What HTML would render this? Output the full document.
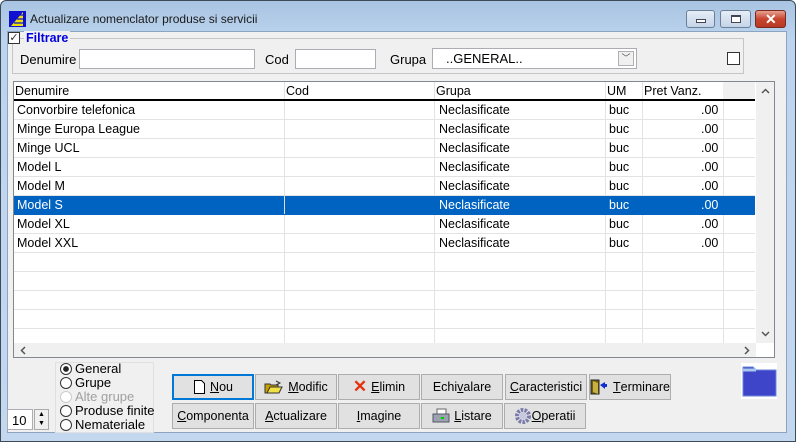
<!DOCTYPE html>
<html><head><meta charset="utf-8"><style>
*{box-sizing:border-box;margin:0;padding:0}
body{width:796px;height:442px;overflow:hidden;font-family:"Liberation Sans",Arial,sans-serif;font-size:13px;color:#000;background:#fff;position:relative}
.a{position:absolute}
.frame{left:0;top:0;width:796px;height:442px;background:linear-gradient(#a9c4e2,#bcd4ee 40px,#c3d8ef);border:1px solid #3c4a5a;border-radius:6px 6px 0 0}
.client{left:7px;top:31px;width:780px;height:402px;background:#f0f0f0;border:1px solid #8ca4c0}
.tb{top:10px;height:18px;border:1px solid #6d7f96;border-radius:3px;background:linear-gradient(#e6eef8,#c4d4e8)}
.inp{background:#fff;border:1px solid #abadb3;height:20px}
.btn{height:26px;border:1px solid #adadad;background:#e1e1e1;display:flex;align-items:center;justify-content:center;font-size:12.5px}
.row{position:absolute;left:0;width:741px;height:19px;border-bottom:1px solid #e3e3e3}
.row span{position:absolute;top:2px;white-space:nowrap;font-size:12.5px}
.vl{position:absolute;top:0;width:1px;height:100%;background:#e3e3e3}
.rad{width:12px;height:12px;border:1px solid #333;border-radius:50%;background:#fff;display:inline-block;vertical-align:-2px;margin-right:3px}
u{text-decoration:underline}
</style></head><body>
<div class="a frame"></div>
<div class="a" style="left:9px;top:11px;width:17px;height:16px;background:#1010d0"></div>
<svg class="a" style="left:9px;top:11px" width="17" height="16"><path d="M2 15 L14 1 L14 15 Z" fill="#f0e000"/><path d="M5 12h10M8 8h7M11 4h4" stroke="#1010d0" stroke-width="1.2"/></svg>
<div class="a" style="left:30px;top:12px;font-size:12px;color:#1a1a1a">Actualizare nomenclator produse si servicii</div>
<div class="a tb" style="left:686px;width:29px"><div class="a" style="left:9px;top:8px;width:10px;height:4px;border:1px solid #445;background:#fff"></div></div>
<div class="a tb" style="left:720px;width:31px"><div class="a" style="left:10px;top:4px;width:10px;height:8px;border:1px solid #445;border-top-width:2px;background:#fff"></div></div>
<div class="a tb" style="left:755px;width:31px;background:linear-gradient(#e8a090,#c8452f 50%,#b83a24);border-color:#7a2a20"><div class="a" style="left:9px;top:0px;color:#fff;font-weight:bold;font-size:14px">✕</div></div>
<div class="a client"></div>
<div class="a" style="left:12px;top:38px;width:732px;height:36px;border:1px solid #c5c5c5"></div>
<div class="a" style="left:8px;top:32px;width:12px;height:12px;border:1px solid #333;background:#fff;font-size:11px;line-height:10px;text-align:center;color:#333">✓</div>
<div class="a" style="left:24px;top:31px;background:#f0f0f0;padding:0 2px;color:#0000e0;font-weight:bold;font-size:12.5px">Filtrare</div>
<div class="a" style="left:20px;top:52px">Denumire</div>
<div class="a inp" style="left:79px;top:49px;width:176px"></div>
<div class="a" style="left:265px;top:52px">Cod</div>
<div class="a inp" style="left:295px;top:49px;width:81px"></div>
<div class="a" style="left:390px;top:52px">Grupa</div>
<div class="a inp" style="left:432px;top:48px;width:205px;height:21px"><span class="a" style="left:13px;top:2px">..GENERAL..</span><div class="a" style="right:2px;top:2px;width:16px;height:15px;border:1px solid #b0b0b0;background:#f0f0f0;font-size:9px;text-align:center;color:#555;line-height:13px">﹀</div></div>
<div class="a" style="left:727px;top:52px;width:13px;height:13px;border:1px solid #333;background:#fff"></div>
<div class="a" style="left:13px;top:81px;width:762px;height:277px;border:1px solid #828790;background:#fff;overflow:hidden">
 <div class="a" style="left:0;top:0;width:741px;height:19px;border-bottom:2px solid #000;background:#fff;font-size:12.5px">
  <span class="a" style="left:1px;top:2px">Denumire</span><span class="a" style="left:272px;top:2px">Cod</span><span class="a" style="left:422px;top:2px">Grupa</span><span class="a" style="left:593px;top:2px">UM</span><span class="a" style="left:630px;top:2px">Pret Vanz.</span>
  <div class="vl" style="left:270px"></div><div class="vl" style="left:420px"></div><div class="vl" style="left:591px"></div><div class="vl" style="left:628px"></div>
  <div class="a" style="left:709px;top:0;width:32px;height:17px;background:#f0f0f0"></div>
 </div>
 <div class="a" style="left:0;top:19px;width:741px;height:242px">
  <div class="vl" style="left:270px"></div><div class="vl" style="left:420px"></div><div class="vl" style="left:591px"></div><div class="vl" style="left:628px"></div><div class="vl" style="left:709px"></div>
 </div>
 <div class="a" style="left:0;top:19px">
  <div class="row" style="top:0"><span style="left:3px">Convorbire telefonica</span><span style="left:425px">Neclasificate</span><span style="left:595px">buc</span><span style="left:687px">.00</span></div>
  <div class="row" style="top:19px"><span style="left:3px">Minge Europa League</span><span style="left:425px">Neclasificate</span><span style="left:595px">buc</span><span style="left:687px">.00</span></div>
  <div class="row" style="top:38px"><span style="left:3px">Minge UCL</span><span style="left:425px">Neclasificate</span><span style="left:595px">buc</span><span style="left:687px">.00</span></div>
  <div class="row" style="top:57px"><span style="left:3px">Model L</span><span style="left:425px">Neclasificate</span><span style="left:595px">buc</span><span style="left:687px">.00</span></div>
  <div class="row" style="top:76px"><span style="left:3px">Model M</span><span style="left:425px">Neclasificate</span><span style="left:595px">buc</span><span style="left:687px">.00</span></div>
  <div class="row" style="top:95px;background:#0063c1;color:#fff;border-color:#0063c1"><span style="left:3px">Model S</span><span style="left:425px">Neclasificate</span><span style="left:595px">buc</span><span style="left:687px">.00</span><div class="vl" style="left:270px;background:#ddd"></div></div>
  <div class="row" style="top:114px"><span style="left:3px">Model XL</span><span style="left:425px">Neclasificate</span><span style="left:595px">buc</span><span style="left:687px">.00</span></div>
  <div class="row" style="top:133px"><span style="left:3px">Model XXL</span><span style="left:425px">Neclasificate</span><span style="left:595px">buc</span><span style="left:687px">.00</span></div>
  <div class="row" style="top:152px"></div><div class="row" style="top:171px"></div><div class="row" style="top:190px"></div><div class="row" style="top:209px"></div><div class="row" style="top:228px"></div>
 </div>
 <div class="a" style="left:742px;top:0;width:18px;height:261px;background:#f0f0f0"><svg class="a" style="left:5px;top:6px" width="9" height="6"><path d="M1 5l3.5-3.5L8 5" fill="none" stroke="#555" stroke-width="1.5"/></svg><svg class="a" style="left:5px;top:249px" width="9" height="6"><path d="M1 1l3.5 3.5L8 1" fill="none" stroke="#555" stroke-width="1.5"/></svg></div>
 <div class="a" style="left:0;top:261px;width:742px;height:14px;background:#f0f0f0"><svg class="a" style="left:6px;top:3px" width="6" height="9"><path d="M5 1L1.5 4.5 5 8" fill="none" stroke="#555" stroke-width="1.5"/></svg><svg class="a" style="left:730px;top:3px" width="6" height="9"><path d="M1 1l3.5 3.5L1 8" fill="none" stroke="#555" stroke-width="1.5"/></svg></div>
</div>
<div class="a" style="left:55px;top:362px;width:99px;height:71px;border:1px solid #e0e0e0"></div>
<div class="a" style="left:60px;top:362px;line-height:14px;font-size:13px">
 <div><span class="rad" style="background:radial-gradient(#222 35%,#fff 45%)"></span>General</div>
 <div><span class="rad"></span>Grupe</div>
 <div style="color:#a0a0a0"><span class="rad" style="border-color:#ccc"></span>Alte grupe</div>
 <div><span class="rad"></span>Produse finite</div>
 <div><span class="rad"></span>Nemateriale</div>
</div>
<div class="a inp" style="left:7px;top:409px;width:26px;height:21px;padding:3px 0 0 4px">10</div>
<div class="a" style="left:34px;top:409px;width:15px;height:21px;border:1px solid #aaa;background:#f0f0f0;font-size:7px;text-align:center;line-height:9px">▲<br>▼</div>
<div class="a btn" style="left:172px;top:374px;width:82px;border:2px solid #0078d7"><svg width="13" height="14" style="margin-right:4px"><path d="M1.5 .5h7l3 3v10h-10z" fill="#fff" stroke="#000"/></svg><u>N</u>ou</div>
<div class="a btn" style="left:255px;top:374px;width:82px"><svg width="20" height="14" style="margin-right:4px"><path d="M1 4h5l1 1h7v8H1z" fill="#c8a000" stroke="#333"/><path d="M3 13l3-6h12l-3 6z" fill="#f0e040" stroke="#333"/><path d="M12 1l4 2-4 2" fill="none" stroke="#333"/></svg><u>M</u>odific</div>
<div class="a btn" style="left:338px;top:374px;width:82px"><span style="color:#e8300c;font-size:17px;font-weight:bold;margin-right:4px;line-height:12px">✕</span><u>E</u>limin</div>
<div class="a btn" style="left:421px;top:374px;width:82px">Echi<u>v</u>alare</div>
<div class="a btn" style="left:505px;top:374px;width:82px"><u>C</u>aracteristici</div>
<div class="a btn" style="left:589px;top:374px;width:82px"><svg width="18" height="16" style="margin-right:5px"><rect x="1" y="1" width="8" height="14" fill="#706010" stroke="#222"/><path d="M3 2l5 2v11l-5-2z" fill="#c8b040"/><path d="M10 6l5-3v2h2v3h-2v2z" fill="#1030d0"/></svg><u>T</u>erminare</div>
<div class="a btn" style="left:172px;top:403px;width:82px"><u>C</u>omponenta</div>
<div class="a btn" style="left:255px;top:403px;width:82px"><u>A</u>ctualizare</div>
<div class="a btn" style="left:338px;top:403px;width:82px"><u>I</u>magine</div>
<div class="a btn" style="left:421px;top:403px;width:82px"><svg width="18" height="16" style="margin-right:4px"><path d="M5 1h9v5H5z" fill="#fff" stroke="#666"/><path d="M1 6h16v8H1z" fill="#9aa4b0" stroke="#556"/><rect x="9" y="9" width="3" height="2" fill="#0c0"/></svg><u>L</u>istare</div>
<div class="a btn" style="left:504px;top:403px;width:82px"><svg width="16" height="16" style="margin-right:1px"><circle cx="8" cy="8" r="6" fill="none" stroke="#7a7aaa" stroke-width="4" stroke-dasharray="2.5 1.2"/><circle cx="8" cy="8" r="3.5" fill="#c8c8e0"/></svg><u>O</u>peratii</div>
<div class="a" style="left:741px;top:363px;width:36px;height:36px;background:#fff"></div>
<svg class="a" style="left:742px;top:366px" width="35" height="31"><path d="M1 1h10l3 3h20v26H1z" fill="#3f45c8" stroke="#6a86d8"/><path d="M1 4h13" stroke="#a8c8f0" stroke-width="3"/></svg>
</body></html>
